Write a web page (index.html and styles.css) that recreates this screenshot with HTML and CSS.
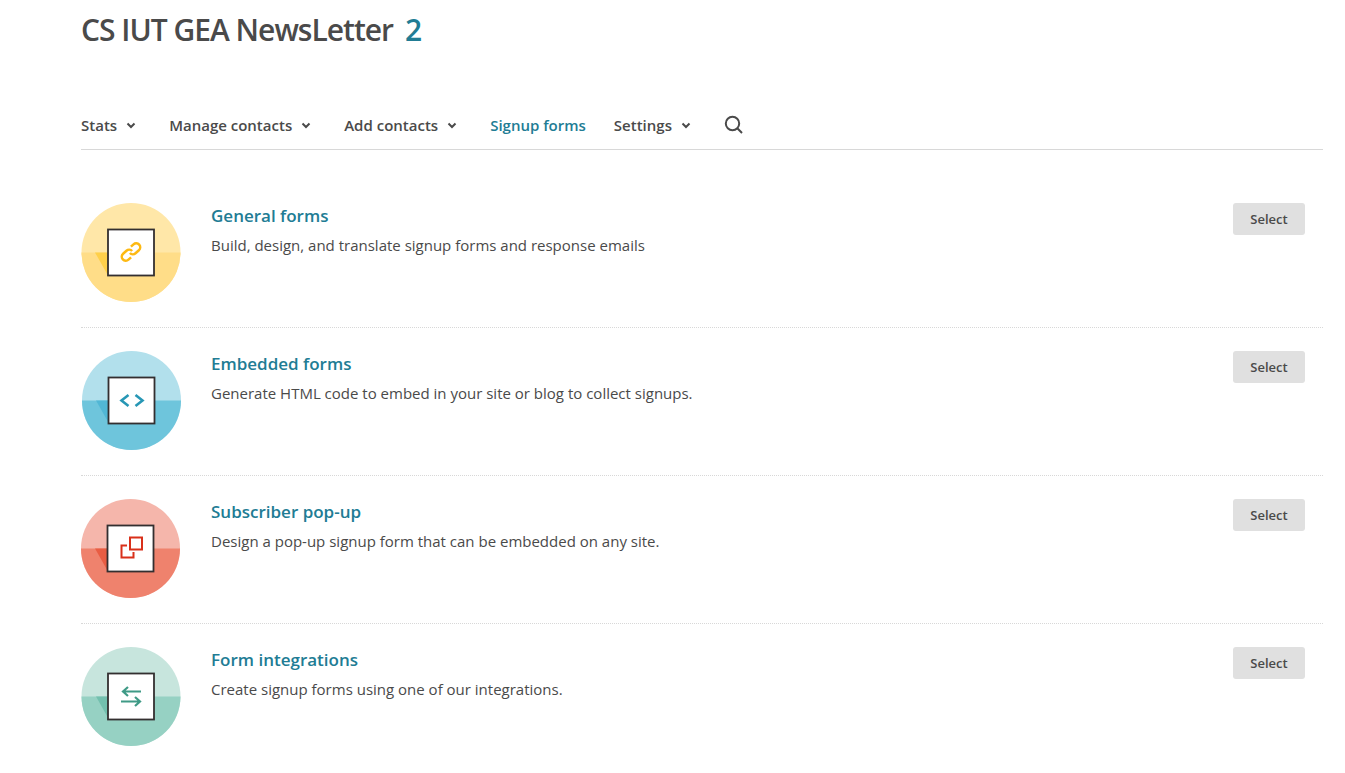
FILE: index.html
```html
<!DOCTYPE html>
<html lang="en">
<head>
<meta charset="utf-8">
<title>Signup forms</title>
<link rel="stylesheet" href="styles.css">
</head>
<body>
<main class="page">
  <h1 class="title">CS IUT GEA NewsLetter <a class="count" href="#">2</a></h1>
  <nav class="tabs" aria-label="List">
    <button class="tab" type="button">Stats <svg class="chevron" viewBox="0 0 10 8"><path d="M1.500 2.500 5 6 8.500 2.500"/></svg></button>
    <button class="tab" type="button">Manage contacts <svg class="chevron" viewBox="0 0 10 8"><path d="M1.500 2.500 5 6 8.500 2.500"/></svg></button>
    <button class="tab" type="button">Add contacts <svg class="chevron" viewBox="0 0 10 8"><path d="M1.500 2.500 5 6 8.500 2.500"/></svg></button>
    <a class="tab tab-link" href="#">Signup forms</a>
    <button class="tab" type="button">Settings <svg class="chevron" viewBox="0 0 10 8"><path d="M1.500 2.500 5 6 8.500 2.500"/></svg></button>
    <button class="tab" type="button" aria-label="Search"><svg class="search" viewBox="0 0 20 20"><circle cx="8.500" cy="8.500" r="6.700"/><path d="M13.300 13.300 18 18"/></svg></button>
  </nav>
  <ul class="forms">
    <li class="form-row">
      <svg class="badge" viewBox="0 0 100 100">
        <circle cx="50" cy="49.500" r="49.500" fill="#ffe7a8"/>
        <path d="M.5 49.500h99a49.500 49.500 0 0 1-99 0z" fill="#ffdd88"/>
        <path d="M14 49.500h13v23z" fill="#ffd04a"/>
        <rect x="27" y="26.500" width="46" height="46" fill="#fff" stroke="#332f30" stroke-width="1.800"/>
        <g transform="translate(50 49) rotate(-42)" fill="none" stroke="#fdb913" stroke-width="2.500">
          <path d="M-3.500 4H-7a4 4 0 0 1 0-8H-2.500A4 4 0 0 1 1.500 0"/>
          <path d="M3.500-4H7a4 4 0 0 1 0 8H2.500A4 4 0 0 1-1.500 0"/>
        </g>
      </svg>
      <div class="info">
        <h2 class="name"><a href="#">General forms</a></h2>
        <p class="desc">Build, design, and translate signup forms and response emails</p>
      </div>
      <button class="select" type="button">Select</button>
    </li>
    <li class="form-row">
      <svg class="badge" viewBox="0 0 100 100">
        <circle cx="50.500" cy="49.500" r="49.500" fill="#b2e0ec"/>
        <path d="M1 49.500h99a49.500 49.500 0 0 1-99 0z" fill="#6ec5dc"/>
        <path d="M15 49.500h13v23z" fill="#51b7d5"/>
        <rect x="27.500" y="26.500" width="46" height="46" fill="#fff" stroke="#332f30" stroke-width="1.800"/>
        <path d="m47.500 44-7 5.500 7 5.500M54.500 44l7 5.500-7 5.500" fill="none" stroke="#2797b5" stroke-width="2.600"/>
      </svg>
      <div class="info">
        <h2 class="name"><a href="#">Embedded forms</a></h2>
        <p class="desc">Generate HTML code to embed in your site or blog to collect signups.</p>
      </div>
      <button class="select" type="button">Select</button>
    </li>
    <li class="form-row">
      <svg class="badge" viewBox="0 0 100 100">
        <circle cx="49.500" cy="49.500" r="49.500" fill="#f5b6ab"/>
        <path d="M0 49.500h99a49.500 49.500 0 0 1-99 0z" fill="#ef826d"/>
        <path d="M14 49.500h13v23z" fill="#e95d43"/>
        <rect x="26.500" y="26.500" width="46" height="46" fill="#fff" stroke="#332f30" stroke-width="1.800"/>
        <path d="M49 38.500h12v12H49zM46 46.500h-5.500v12h12V53" fill="none" stroke="#d9301a" stroke-width="2"/>
      </svg>
      <div class="info">
        <h2 class="name"><a href="#">Subscriber pop-up</a></h2>
        <p class="desc">Design a pop-up signup form that can be embedded on any site.</p>
      </div>
      <button class="select" type="button">Select</button>
    </li>
    <li class="form-row">
      <svg class="badge" viewBox="0 0 100 100">
        <circle cx="50" cy="49.500" r="49.500" fill="#c7e5dd"/>
        <path d="M.5 49.500h99a49.500 49.500 0 0 1-99 0z" fill="#96d1c3"/>
        <path d="M15 49.500h13v23z" fill="#73c0ae"/>
        <rect x="27" y="26.500" width="46" height="46" fill="#fff" stroke="#332f30" stroke-width="1.800"/>
        <path d="M60 44.500H42M47 40l-5 4.500 5 4.500M40 54.500h18.500M54 50l5 4.500-5 4.500" fill="none" stroke="#3f9a86" stroke-width="2.200"/>
      </svg>
      <div class="info">
        <h2 class="name"><a href="#">Form integrations</a></h2>
        <p class="desc">Create signup forms using one of our integrations.</p>
      </div>
      <button class="select" type="button">Select</button>
    </li>
  </ul>
</main>
</body>
</html>
```
FILE: styles.css
```css
* {
  box-sizing: border-box;
}

body {
  margin: 0;
  background: #fff;
  color: #4a4a4a;
  font-family: "Open Sans", sans-serif;
  font-size: 15px;
  line-height: 24px;
}

a {
  color: #217c94;
  text-decoration: none;
}

.page {
  padding: 8px 22px 0 81px;
}

.title {
  display: flex;
  gap: 12px;
  margin: 0 0 60px;
  font-size: 30px;
  font-weight: 600;
  line-height: 44px;
  letter-spacing: -1px;
}

.tabs {
  display: flex;
  align-items: center;
  height: 38px;
  padding-bottom: 11px;
  border-bottom: 1px solid #d8d8d8;
  gap: 33px;
}

.tab {
  display: flex;
  align-items: center;
  gap: 9px;
  padding: 0;
  border: 0;
  background: none;
  color: #4a4a4a;
  font: 600 15px/24px "Open Sans", sans-serif;
}

.tab-link {
  margin-right: -5px;
  color: #217c94;
}

.chevron {
  width: 10px;
  height: 8px;
  fill: none;
  stroke: #4a4a4a;
  stroke-width: 2;
}

.search {
  width: 20px;
  height: 20px;
  fill: none;
  stroke: #4a4a4a;
  stroke-width: 2;
}

.forms {
  margin: 30px 0 0;
  padding: 0;
  list-style: none;
}

.form-row {
  display: flex;
  align-items: flex-start;
  padding: 23px 18px 24px 0;
  border-bottom: 1px dotted #d8d8d8;
}

.form-row:last-child {
  border-bottom: 0;
}

.badge {
  flex: none;
  width: 100px;
  height: 100px;
  margin-right: 30px;
}

.info {
  flex: 1;
}

.name {
  margin: 0;
  font-size: 17px;
  font-weight: 600;
  line-height: 26px;
}

.desc {
  margin: 4px 0 0;
}

.select {
  width: 72px;
  height: 32px;
  padding: 0;
  border: 0;
  border-radius: 3px;
  background: #e0e0e0;
  color: #4a4a4a;
  font: 600 13px/20px "Open Sans", sans-serif;
}
```
